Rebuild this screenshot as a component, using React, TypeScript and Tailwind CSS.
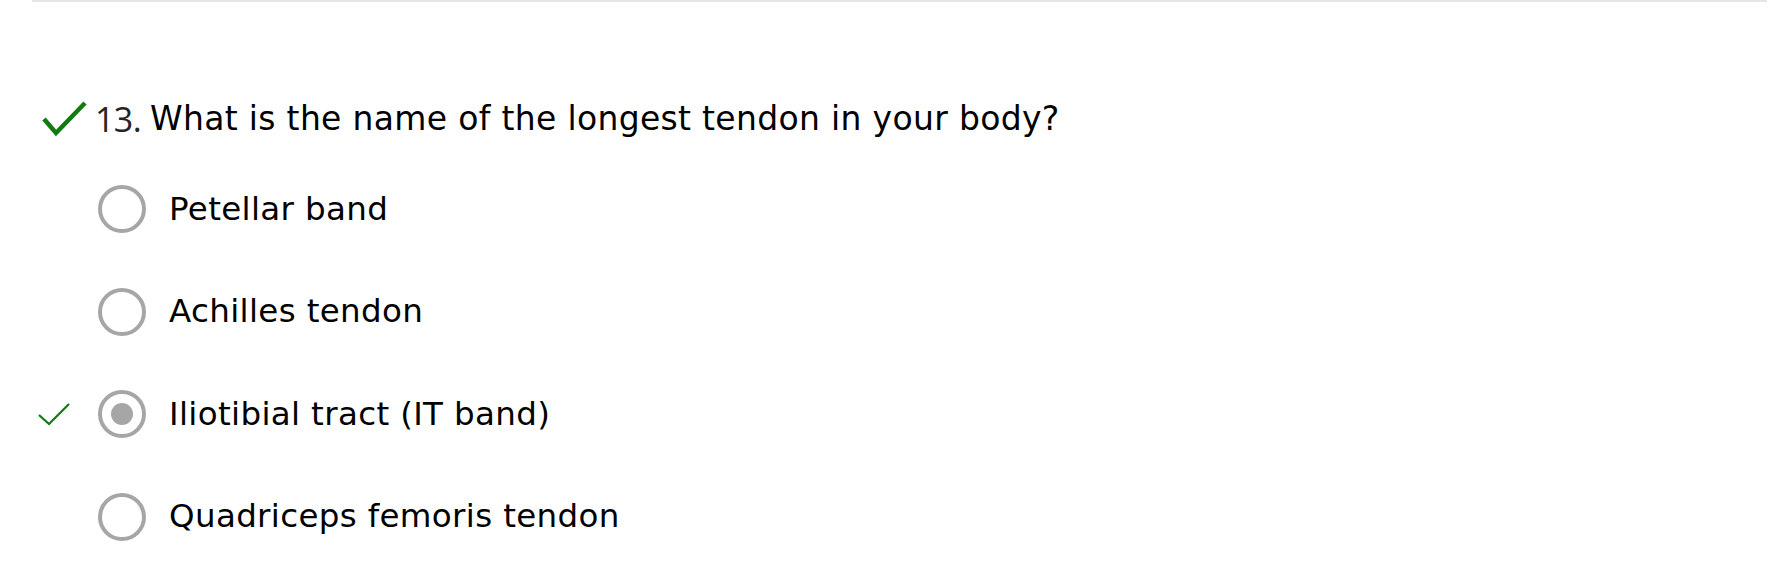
import React from "react";

const options = [
  { label: "Petellar band", selected: false },
  { label: "Achilles tendon", selected: false },
  { label: "Iliotibial tract (IT band)", selected: true },
  { label: "Quadriceps femoris tendon", selected: false },
];

function BigCheck() {
  return (
    <svg width="45" height="36" viewBox="0 0 45 36" fill="none">
      <path d="M2 18 L14 32 L43 2" stroke="#107c10" strokeWidth="4.5" strokeLinejoin="miter" />
    </svg>
  );
}

function SmallCheck() {
  return (
    <svg width="32" height="24" viewBox="0 0 32 24" fill="none">
      <path d="M1 13 L11 22 L31 2" stroke="#107c10" strokeWidth="2.2" />
    </svg>
  );
}

function Radio({ selected }: { selected: boolean }) {
  return (
    <div className="flex h-[48px] w-[48px] shrink-0 items-center justify-center rounded-full border-[4.5px] border-[#a6a6a6] bg-white">
      {selected && <div className="h-[22px] w-[22px] rounded-full bg-[#a6a6a6]" />}
    </div>
  );
}

export default function App() {
  return (
    <div className="min-h-[562px] bg-white text-black [font-family:'DejaVu_Sans',Verdana,sans-serif]">
      <div className="ml-[32px] mr-[25px] border-t-2 border-[#e6e6e6]" />
      <div className="ml-[32px] pt-[93px]">
        <div className="flex h-[48px] items-center">
          <div className="ml-[10px] flex w-[53px] shrink-0 items-center">
            <BigCheck />
          </div>
          <span className="text-[34px] text-[#252424] [font-family:'Open_Sans',sans-serif] tracking-[-0.6px]">
            13.
          </span>
          <span className="ml-[9px] text-[33px] tracking-[0.32px]">What is the name of the longest tendon in your body?</span>
        </div>
        <div className="mt-[15px]">
          {options.map((o) => (
            <div key={o.label} className="flex h-[102.5px] items-center">
              <div className="flex w-[66px] shrink-0 items-center pl-[6px]">
                {o.selected && <SmallCheck />}
              </div>
              <Radio selected={o.selected} />
              <span className="ml-[23px] text-[32.5px] tracking-[0.35px]">{o.label}</span>
            </div>
          ))}
        </div>
      </div>
    </div>
  );
}
